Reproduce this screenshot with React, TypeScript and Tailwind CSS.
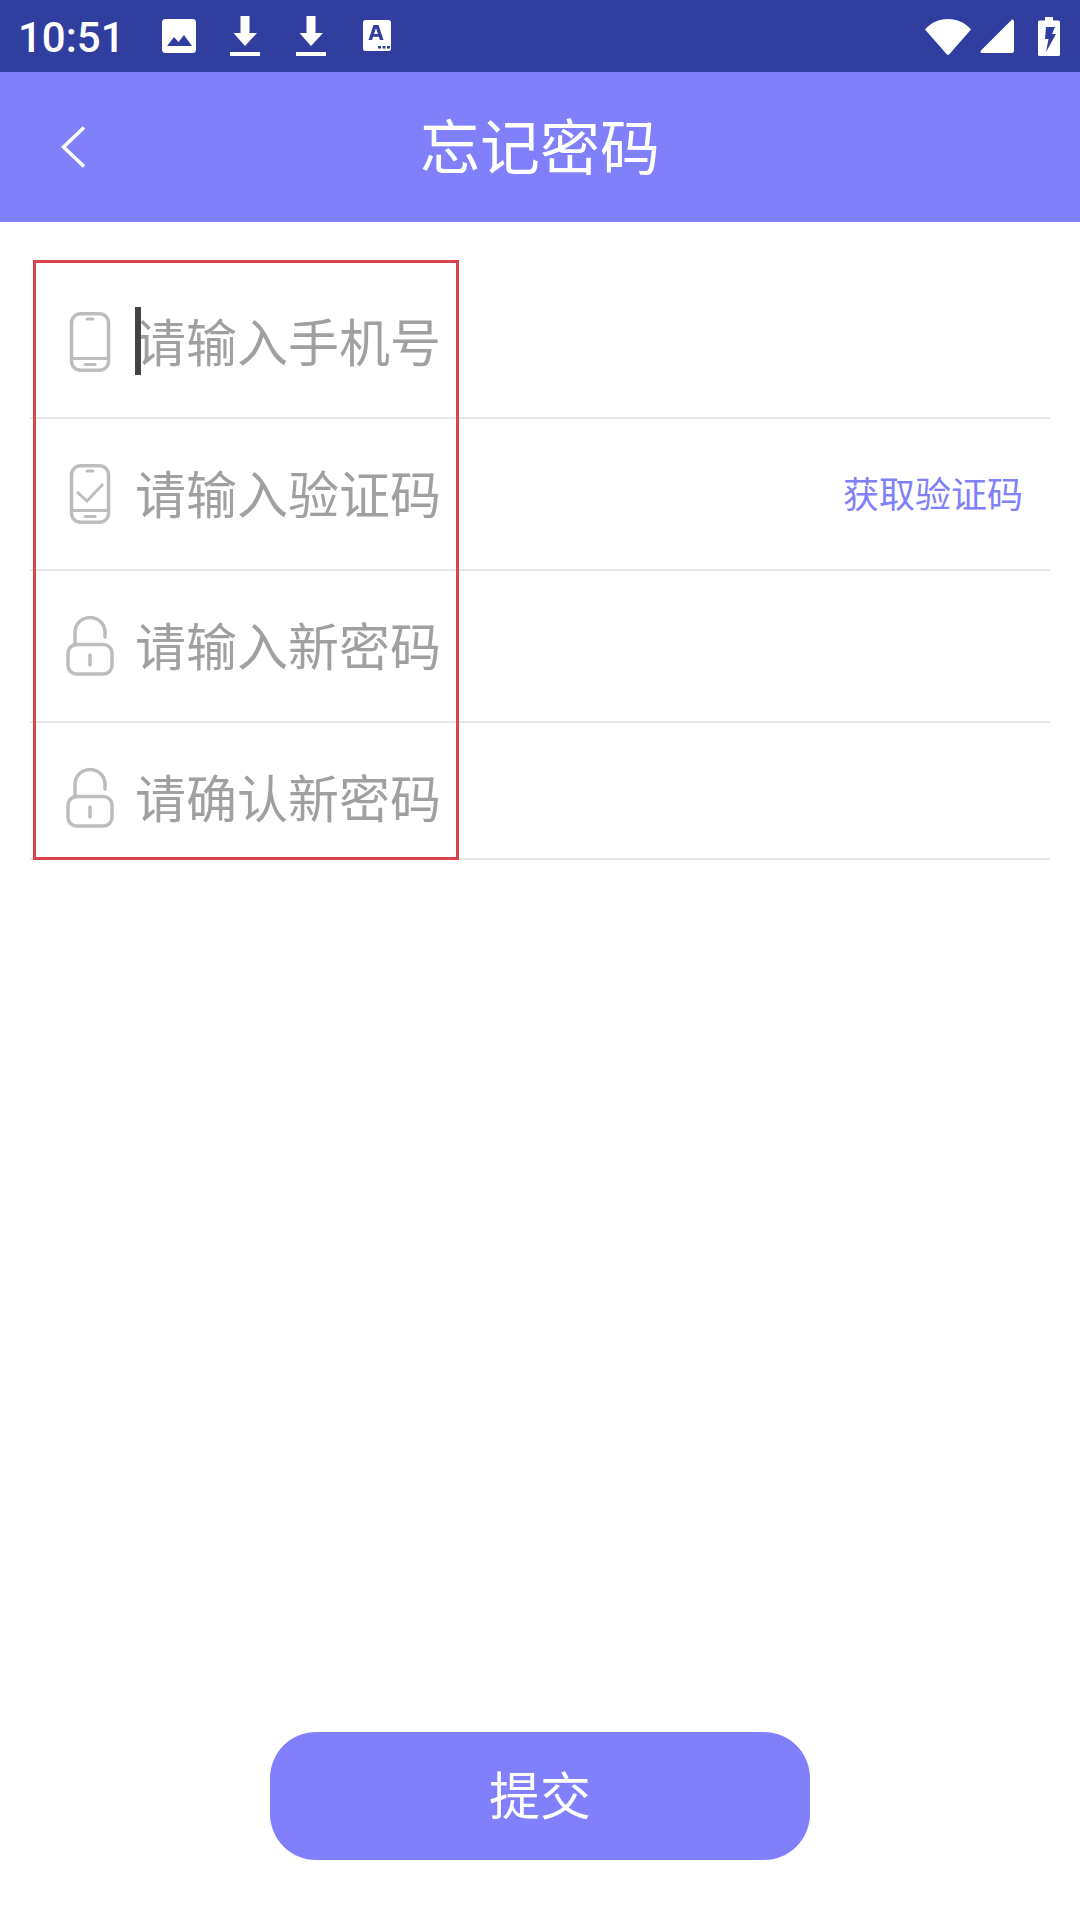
import React from 'react';

const FONT = "font-['Noto_Sans_CJK_SC','Noto_Sans',sans-serif]";

function PhoneIcon({ checked }: { checked?: boolean }) {
  return (
    <svg viewBox="0 0 60 60" className="w-[60px] h-[60px]" fill="none" stroke="#bdbdbd" strokeWidth="3.5">
      <rect x="11.500" y="1.750" width="37" height="56.500" rx="9" />
      <path d="M12 46.500h36" strokeWidth="3" />
      <path d="M27 7h6M25 52.500h10" strokeLinecap="round" strokeWidth="3" />
      {checked && <path d="M17 28l10 9 16-17" strokeWidth="3" />}
    </svg>
  );
}

function LockIcon() {
  return (
    <svg viewBox="0 0 60 60" className="w-[60px] h-[60px]" fill="none" stroke="#bdbdbd" strokeWidth="3.5">
      <path d="M15 29v-13a15 14.500 0 0 1 30 0v5" strokeLinecap="round" />
      <rect x="8" y="28.500" width="44" height="29.500" rx="8.500" />
      <path d="M30 39v10" strokeLinecap="round" />
    </svg>
  );
}

function StatusIcons() {
  return (
    <div className="flex items-center">
      {/* image */}
      <svg viewBox="0 0 34 34" className="w-[34px] h-[34px]">
        <rect width="34" height="34" rx="3.500" fill="#fff" />
        <path d="M5 27l7-9 4.500 5 5.500-7 8 11z" fill="#303f9f" />
      </svg>
      {/* downloads */}
      <svg viewBox="0 0 30 40" className="w-[30px] h-[40px] ml-[34px]">
        <path d="M10.500 0h9v17h7.500L15 30 3.500 17h7zM0 36h30v4H0z" fill="#fff" />
      </svg>
      <svg viewBox="0 0 30 40" className="w-[30px] h-[40px] ml-[36px]">
        <path d="M10.500 0h9v17h7.500L15 30 3.500 17h7zM0 36h30v4H0z" fill="#fff" />
      </svg>
      {/* A badge */}
      <svg viewBox="0 0 28 32" className="w-[28px] h-[32px] ml-[37px]">
        <rect width="28" height="31" rx="2.500" fill="#fff" />
        <path d="M10.500 5h5l5 15h-3.600l-1-3.200h-5.800l-1 3.200H5.500zM11 14h4l-2-6z" fill="#303f9f" fillRule="evenodd" />
        <path d="M15 26h3v2.500h-3zM19.500 26h3v2.500h-3zM24 26h3v2.500h-3z" fill="#303f9f" />
      </svg>
    </div>
  );
}

function SystemIcons() {
  return (
    <div className="flex items-center">
      <svg viewBox="0 0 46 37" className="w-[46px] h-[37px]">
        <path d="M0 11.500C6 4.500 14 1 23 1s17 3.500 23 10.500L24.500 36a2 2 0 0 1-3 0z" fill="#fff" />
      </svg>
      <svg viewBox="0 0 34 34" className="w-[34px] h-[34px] ml-[9px]">
        <path d="M32 .5a2 2 0 0 1 2 2V32a2 2 0 0 1-2 2H2a1.500 1.500 0 0 1-1-2.600z" fill="#fff" />
      </svg>
      <svg viewBox="0 0 22 39" className="w-[22px] h-[39px] ml-[24px]">
        <path d="M7 0h8v3.500h5.500A1.500 1.500 0 0 1 22 5v32.500a1.500 1.500 0 0 1-1.500 1.500h-19A1.500 1.500 0 0 1 0 37.500V5a1.500 1.500 0 0 1 1.500-1.500H7z" fill="#fff" />
        <path d="M8 10h9l-3 7h4L8 35l2.500-13H7z" fill="#303f9f" />
      </svg>
    </div>
  );
}

interface FieldProps {
  icon: React.ReactNode;
  placeholder: string;
  caret?: boolean;
  action?: string;
  last?: boolean;
}

function Field({ icon, placeholder, caret, action, last }: FieldProps) {
  return (
    <div
      className={`flex items-start border-b-2 border-[#e6e6e6] pl-[30px] pr-[27px] pt-[45px] ${
        last ? 'h-[137px]' : 'h-[152px]'
      }`}
    >
      {icon}
      <div className="relative ml-[15px] -mt-[2px] flex-1 text-[51px] leading-[60px] text-[#a0a0a0]">
        {caret && <span className="absolute left-0 top-[-3px] h-[68px] w-[6px] bg-[#444444]" />}
        {placeholder}
      </div>
      {action && <span className="mt-[6px] text-[36px] leading-[44px] text-[#8080f8]">{action}</span>}
    </div>
  );
}

export default function App() {
  return (
    <div className={`relative flex h-[1920px] w-[1080px] flex-col bg-white ${FONT}`}>
      {/* Status bar */}
      <div className="flex h-[72px] items-center justify-between bg-[#303f9f] px-[20px]">
        <div className="flex items-center">
          <span className="-ml-[2px] w-[144px] pt-[3px] font-['Roboto',sans-serif] text-[42px] font-medium leading-[50px] text-white">10:51</span>
          <StatusIcons />
        </div>
        <SystemIcons />
      </div>

      {/* Header */}
      <div className="grid h-[150px] grid-cols-[1fr_auto_1fr] items-center bg-[#8080fa]">
        <svg viewBox="0 0 24 42" className="ml-[61px] h-[42px] w-[24px]" fill="none" stroke="#fff" strokeWidth="3.500">
          <path d="M23 1.500L2.500 21 23 40.500" />
        </svg>
        <h1 className="pb-[6px] text-[60px] font-normal leading-[70px] text-white">忘记密码</h1>
        <div />
      </div>

      {/* Form */}
      <div className="ml-[30px] mt-[45px] w-[1020px]">
        <Field icon={<PhoneIcon />} placeholder="请输入手机号" caret />
        <Field icon={<PhoneIcon checked />} placeholder="请输入验证码" action="获取验证码" />
        <Field icon={<LockIcon />} placeholder="请输入新密码" />
        <Field icon={<LockIcon />} placeholder="请确认新密码" last />
      </div>

      {/* Annotation box */}
      <div className="absolute left-[33px] top-[260px] h-[600px] w-[426px] border-[3px] border-[#d9434a]" />

      {/* Submit */}
      <div className="mt-auto flex justify-center pb-[60px]">
        <button className="h-[128px] w-[540px] rounded-[46px] bg-[#8080fa] pb-[6px] text-[51px] leading-[60px] text-white">提交</button>
      </div>
    </div>
  );
}
